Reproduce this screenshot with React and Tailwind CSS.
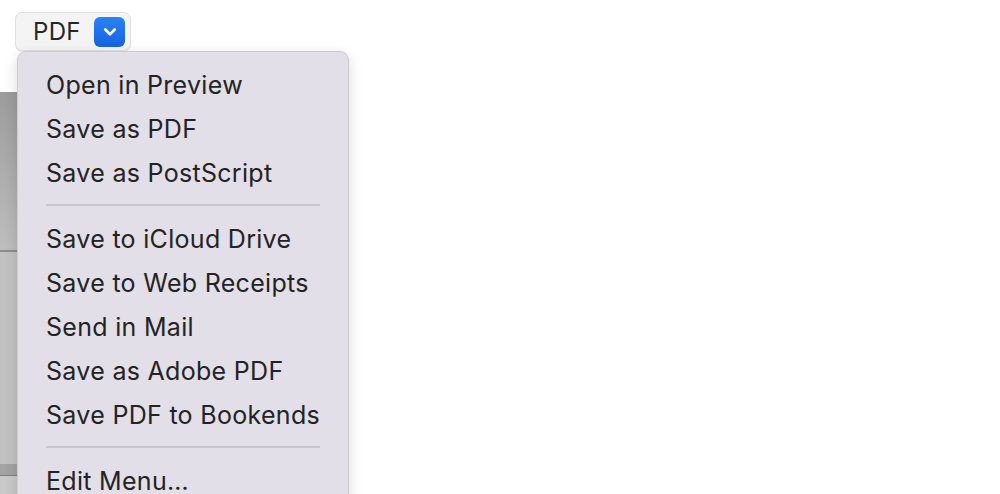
import React from 'react';

const groups = [
  ['Open in Preview', 'Save as PDF', 'Save as PostScript'],
  ['Save to iCloud Drive', 'Save to Web Receipts', 'Send in Mail', 'Save as Adobe PDF', 'Save PDF to Bookends'],
  ['Edit Menu…'],
];

const App = () => {
  return (
    <div className="relative w-[1000px] h-[494px] overflow-hidden bg-white" style={{ fontFamily: 'Inter, "Noto Sans", sans-serif' }}>
      {/* window content behind the menu */}
      <div className="absolute left-0 top-[92px] w-[18px] flex flex-col">
        <div className="h-[158px] bg-gradient-to-b from-[#9c9c9c] to-[#bebebe] border-r border-[#8a8a8a]" />
        <div className="h-[2px] bg-[#8e8e8e]" />
        <div className="h-[212px] bg-[#c2c2c2] border-r border-[#9a9a9a]" />
        <div className="h-[11px] bg-[#a3a3a3]" />
        <div className="h-[1px] bg-[#7f7f7f]" />
        <div className="h-[20px] bg-[#c9c9c9]" />
      </div>

      {/* popup button */}
      <div className="absolute left-[15px] top-[12px] w-[116px] h-[39px] rounded-[7px] bg-[#f4f4f4] border border-[#e0e0e0] shadow-[0_1px_1px_rgba(0,0,0,0.08)] flex items-center pl-[17px] pr-[5px] justify-between">
        <span className="text-[24px] text-[#262626] leading-none tracking-[0.3px]">PDF</span>
        <div className="w-[31px] h-[30px] rounded-[6px] bg-gradient-to-b from-[#2a82f5] to-[#1463df] flex items-center justify-center">
          <svg width="14" height="10" viewBox="0 0 14 10" fill="none">
            <path d="M2.3 2.6 L7 7.2 L11.7 2.6" stroke="white" strokeWidth="2.8" strokeLinecap="round" strokeLinejoin="round" />
          </svg>
        </div>
      </div>

      {/* dropdown menu */}
      <div className="absolute left-[17px] top-[51px] w-[332px] h-[470px] rounded-[9px] bg-[#e3dfe8] border border-[#cfcbd3] shadow-[0_4px_14px_rgba(0,0,0,0.15)] pt-[12px]">
        {groups.map((group, gi) => (
          <div key={gi}>
            {gi > 0 && (
              <div className="h-[22px] pt-[8px] px-[28px]">
                <div className="w-full h-[2px] bg-[#c9c5cd]" />
              </div>
            )}
            {group.map((item) => (
              <div key={item} className="h-[44px] flex items-center pl-[28px] text-[25px] text-[#232323] tracking-[0.3px] whitespace-nowrap">
                {item}
              </div>
            ))}
          </div>
        ))}
      </div>
    </div>
  );
};

export default App;
